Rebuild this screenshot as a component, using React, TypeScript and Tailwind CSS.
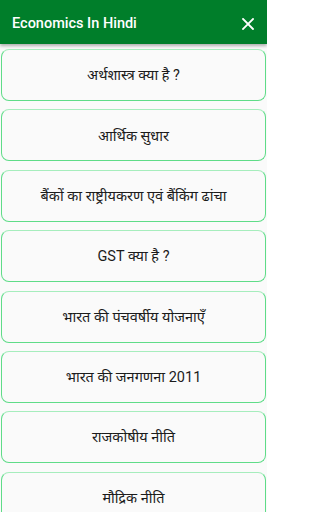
import React from "react";

const items = [
  "अर्थशास्त्र क्या है ?",
  "आर्थिक सुधार",
  "बैंकों का राष्ट्रीयकरण एवं बैंकिंग ढांचा",
  "GST क्या है ?",
  "भारत की पंचवर्षीय योजनाएँ",
  "भारत की जनगणना 2011",
  "राजकोषीय नीति",
  "मौद्रिक नीति",
];

export default function App() {
  return (
    <div className="w-[267px] h-[512px] overflow-hidden bg-[#fafafa] flex flex-col" style={{ fontFamily: "Roboto, 'Noto Sans Devanagari UI', 'Noto Sans Devanagari', sans-serif" }}>
      <div className="h-[44px] shrink-0 bg-[#007e2a] flex items-center justify-between pl-[12px] pr-[13px] pt-[3px] shadow-[0_2px_3px_rgba(0,0,0,0.3)] relative z-10">
        <span className="text-white text-[14.5px] font-medium">Economics In Hindi</span>
        <svg width="12" height="12" viewBox="0 0 12 12">
          <path d="M1 1L11 11M11 1L1 11" stroke="white" strokeWidth="1.8" strokeLinecap="square" />
        </svg>
      </div>
      <div className="flex flex-col gap-[8.4px] pt-[5px] px-[1px]">
        {items.map((t) => (
          <div key={t} className="h-[52px] shrink-0 rounded-[8px] border border-[#5fdc88] border-t-[#a6edbd] bg-[#fafafa] flex items-center justify-center pt-[2px] text-[14.5px] text-[#1c1c1c]">
            {t}
          </div>
        ))}
      </div>
    </div>
  );
}
